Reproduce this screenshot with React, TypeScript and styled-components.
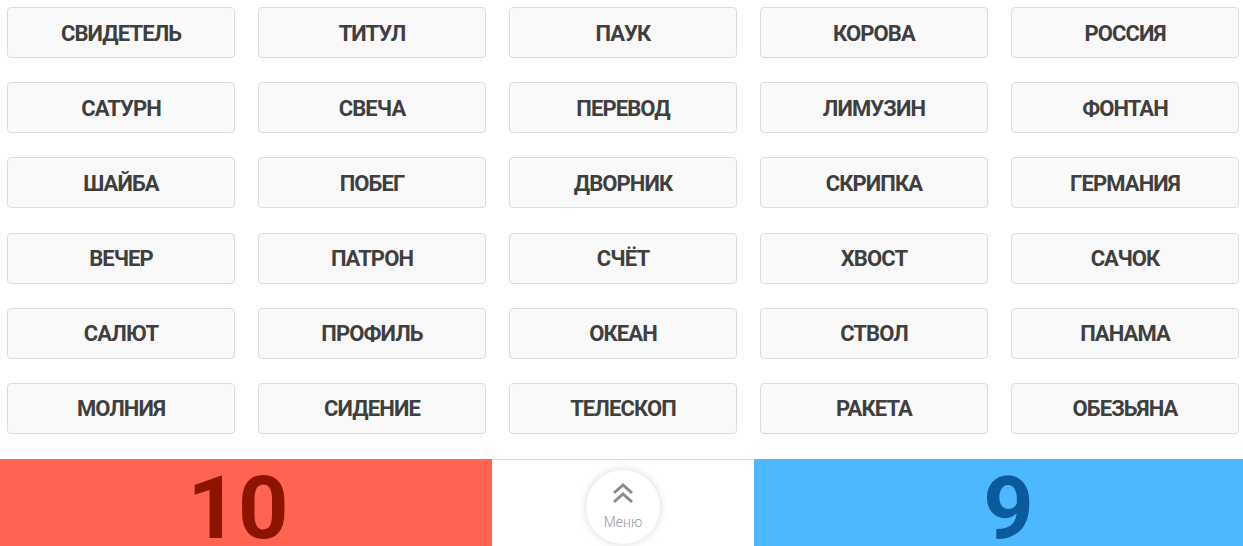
import React from "react";
import styled, { createGlobalStyle } from "styled-components";

const GlobalStyle = createGlobalStyle`
  html, body {
    margin: 0;
    padding: 0;
    background: #ffffff;
    font-family: Roboto, "Liberation Sans", sans-serif;
    overflow: hidden;
  }
`;

const Page = styled.div`
  width: 1243px;
  height: 546px;
  display: flex;
  flex-direction: column;
  overflow: hidden;
`;

const WordGrid = styled.div`
  display: grid;
  grid-template-columns: repeat(5, 228px);
  grid-auto-rows: 51px;
  column-gap: 23px;
  row-gap: 24.2px;
  padding: 7px 4px 0 7px;
`;

const WordCard = styled.div`
  box-sizing: border-box;
  display: flex;
  align-items: center;
  justify-content: center;
  padding-top: 1px;
  background: #f9f9f9;
  border: 1px solid #dcdcdc;
  border-radius: 4px;
  color: #3f3f3f;
  font-family: Roboto, "Liberation Sans", sans-serif;
  font-weight: 700;
  font-size: 22px;
  letter-spacing: -0.9px;
  text-transform: uppercase;
`;

const ScoreBar = styled.div`
  margin-top: 25px;
  height: 87px;
  display: grid;
  grid-template-columns: 492px 262px 1fr;
`;

const TeamPanel = styled.div<{ $bg: string; $fg: string; $shift: number }>`
  box-sizing: border-box;
  background: ${(p) => p.$bg};
  color: ${(p) => p.$fg};
  font-family: Roboto, "Liberation Sans", sans-serif;
  font-weight: 700;
  font-size: 88px;
  line-height: 0.7;
  text-align: center;
  padding-top: 18px;
  padding-left: ${(p) => (p.$shift > 0 ? p.$shift * 2 : 0)}px;
  padding-right: ${(p) => (p.$shift < 0 ? -p.$shift * 2 : 0)}px;
`;

const MenuCell = styled.div`
  box-sizing: border-box;
  border-top: 1px solid #dddddd;
  background: #ffffff;
  display: flex;
  justify-content: center;
  padding-top: 10px;
  overflow: hidden;
`;

const MenuButton = styled.button`
  box-sizing: border-box;
  width: 74px;
  height: 74px;
  border-radius: 50%;
  border: none;
  background: #ffffff;
  box-shadow: 0 0 8px rgba(0, 0, 0, 0.16);
  display: flex;
  flex-direction: column;
  align-items: center;
  padding: 13px 0 0;
  gap: 10px;
  cursor: pointer;
`;

const MenuLabel = styled.span`
  font-family: Roboto, "Liberation Sans", sans-serif;
  font-weight: 300;
  font-size: 14px;
  line-height: 16px;
  color: #9a9a9a;
`;

const words = [
  "Свидетель", "Титул", "Паук", "Корова", "Россия",
  "Сатурн", "Свеча", "Перевод", "Лимузин", "Фонтан",
  "Шайба", "Побег", "Дворник", "Скрипка", "Германия",
  "Вечер", "Патрон", "Счёт", "Хвост", "Сачок",
  "Салют", "Профиль", "Океан", "Ствол", "Панама",
  "Молния", "Сидение", "Телескоп", "Ракета", "Обезьяна",
];

const ChevronsUp = () => (
  <svg width="22" height="21" viewBox="0 0 22 21" fill="none">
    <polyline points="2,10 11,2 20,10" stroke="#8a8a8a" strokeWidth="3" />
    <polyline points="2,19 11,11 20,19" stroke="#8a8a8a" strokeWidth="3" />
  </svg>
);

export default function App() {
  return (
    <Page>
      <GlobalStyle />
      <WordGrid>
        {words.map((w) => (
          <WordCard key={w}>{w}</WordCard>
        ))}
      </WordGrid>
      <ScoreBar>
        <TeamPanel $bg="#ff6352" $fg="#8c1400" $shift={-8}>10</TeamPanel>
        <MenuCell>
          <MenuButton>
            <ChevronsUp />
            <MenuLabel>Меню</MenuLabel>
          </MenuButton>
        </MenuCell>
        <TeamPanel $bg="#4db8ff" $fg="#0a5a9c" $shift={10}>9</TeamPanel>
      </ScoreBar>
    </Page>
  );
}
